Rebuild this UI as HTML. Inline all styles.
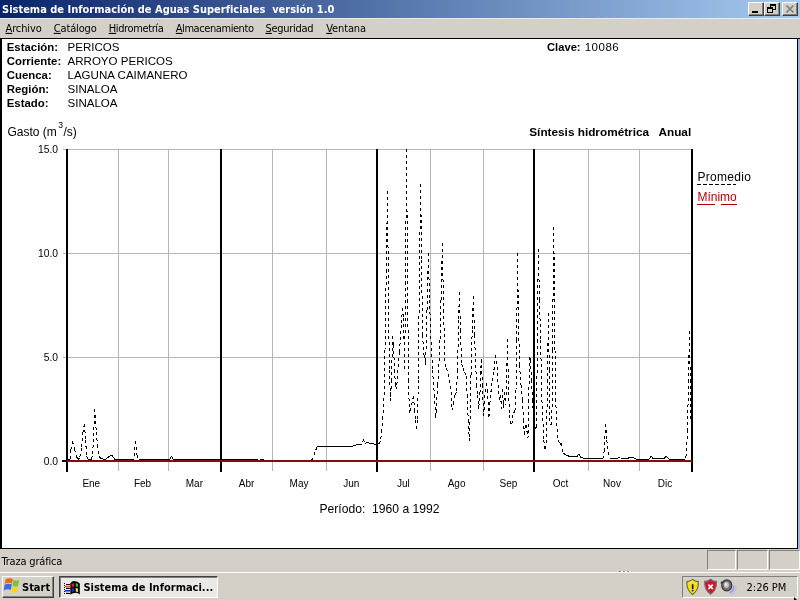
<!DOCTYPE html>
<html lang="es"><head><meta charset="utf-8"><title>Sistema de Información de Aguas Superficiales versión 1.0</title>
<style>
html,body{margin:0;padding:0;}
body{width:800px;height:600px;overflow:hidden;position:relative;background:#d4d0c8;font-family:'Liberation Sans', Arial, sans-serif;}
.abs{position:absolute;}
.t{position:absolute;white-space:pre;line-height:0;height:0;}
.t.r{transform:translateX(-100%);}
.t.c{transform:translateX(-50%);}
#titlebar{left:0;top:0;width:800px;height:18px;background:linear-gradient(to right,#0a246a 0%,#a6caf0 100%);}
#menubar{left:0;top:18px;width:800px;height:20px;background:#d4d0c8;}
#client{left:0;top:38px;width:800px;height:511px;background:#000;}
#clientw{left:2px;top:39px;width:795px;height:509px;background:#fff;}
#rblue{left:798px;top:39px;width:2px;height:510px;background:#9fb6dc;}
.btn{position:absolute;box-sizing:border-box;background:#d4d0c8;border:1px solid;border-color:#fff #404040 #404040 #fff;box-shadow:inset -1px -1px 0 #808080;}
.sunk{position:absolute;box-sizing:border-box;border:1px solid;border-color:#808080 #fff #fff #808080;}
</style></head><body>
<div id="titlebar" class="abs"></div>
<div id="menubar" class="abs"></div>
<div class="abs" style="left:0;top:18px;width:800px;height:1px;background:#eceae6"></div>
<div id="client" class="abs"></div>
<div id="clientw" class="abs"></div>
<div id="rblue" class="abs"></div>
<!-- caption buttons -->
<div class="btn" style="left:748px;top:2px;width:16px;height:14px"><div class="abs" style="left:3px;top:8px;width:6px;height:2px;background:#000"></div></div>
<div class="btn" style="left:764px;top:2px;width:16px;height:14px">
 <div class="abs" style="left:5px;top:1px;width:6px;height:6px;box-sizing:border-box;border:1px solid #000;border-top-width:2px"></div>
 <div class="abs" style="left:2px;top:4px;width:6px;height:6px;box-sizing:border-box;border:1px solid #000;border-top-width:2px;background:#d4d0c8"></div>
</div>
<div class="btn" style="left:782px;top:2px;width:16px;height:14px">
 <svg class="abs" style="left:3px;top:2px" width="9" height="8" viewBox="0 0 9 8"><path d="M0.5 0.5L7.5 7.5M7.5 0.5L0.5 7.5" stroke="#808080" stroke-width="1.6" fill="none"/></svg>
</div>
<svg id="chart" width="800" height="600" viewBox="0 0 800 600" style="position:absolute;left:0;top:0" shape-rendering="crispEdges">
<rect x="63" y="149" width="629" height="1" fill="#b6b6b6"/>
<rect x="63" y="253" width="629" height="1" fill="#b6b6b6"/>
<rect x="63" y="357" width="629" height="1" fill="#b6b6b6"/>
<rect x="118" y="149" width="1" height="322" fill="#b6b6b6"/>
<rect x="168" y="149" width="1" height="322" fill="#b6b6b6"/>
<rect x="272" y="149" width="1" height="322" fill="#b6b6b6"/>
<rect x="326" y="149" width="1" height="322" fill="#b6b6b6"/>
<rect x="430" y="149" width="1" height="322" fill="#b6b6b6"/>
<rect x="483" y="149" width="1" height="322" fill="#b6b6b6"/>
<rect x="588" y="149" width="1" height="322" fill="#b6b6b6"/>
<rect x="639" y="149" width="1" height="322" fill="#b6b6b6"/>
<path d="M70.00 459.00L68.00 459.50M70.80 450.00L70.00 459.00M72.60 441.00L70.80 450.00M72.60 441.00L74.50 449.00M74.50 449.00L76.30 456.00M76.30 456.00L78.00 459.50M79.70 458.00L78.00 459.50M81.50 448.00L79.70 458.00M83.00 432.00L81.50 448.00M84.40 424.00L83.00 432.00M84.40 424.00L85.60 440.00M85.60 440.00L86.60 456.00M86.60 456.00L88.00 459.50M88.00 459.50L89.75 459.50M89.75 459.50L91.50 459.50M92.30 456.00L91.50 459.50M93.20 445.00L92.30 456.00M94.60 409.00L93.20 445.00M94.60 409.00L96.30 432.00M96.30 432.00L97.50 445.00M97.50 445.00L98.80 456.00M98.80 456.00L100.50 458.00M100.50 458.00L102.25 458.75M102.25 458.75L104.00 459.50M106.00 459.00L104.00 459.50M108.00 457.50L106.00 459.00M109.70 456.00L108.00 457.50M111.50 455.00L109.70 456.00M111.50 455.00L113.00 457.00M113.00 457.00L115.00 459.50M115.00 459.50L116.70 459.50M116.70 459.50L118.40 459.50M118.40 459.50L120.10 459.50M120.10 459.50L121.80 459.50M121.80 459.50L123.50 459.50M123.50 459.50L125.20 459.50M125.20 459.50L126.90 459.50M126.90 459.50L128.60 459.50M128.60 459.50L130.30 459.50M130.30 459.50L132.00 459.50M132.00 459.50L133.70 459.50M135.40 441.00L133.70 459.50M135.40 441.00L137.00 455.00M137.00 455.00L138.50 459.50M138.50 459.50L140.25 459.50M140.25 459.50L142.00 459.50M142.00 459.50L143.75 459.50M143.75 459.50L145.50 459.50M145.50 459.50L147.25 459.50M147.25 459.50L149.00 459.50M149.00 459.50L150.75 459.50M150.75 459.50L152.50 459.50M152.50 459.50L154.25 459.50M154.25 459.50L156.00 459.50M156.00 459.50L157.75 459.50M157.75 459.50L159.50 459.50M159.50 459.50L161.25 459.50M161.25 459.50L163.00 459.50M163.00 459.50L164.75 459.50M164.75 459.50L166.50 459.50M166.50 459.50L168.25 459.50M168.25 459.50L170.00 459.50M171.60 456.00L170.00 459.50M171.60 456.00L173.30 459.50M173.30 459.50L175.01 459.50M175.01 459.50L176.72 459.50M176.72 459.50L178.42 459.50M178.42 459.50L180.13 459.50M180.13 459.50L181.84 459.50M181.84 459.50L183.55 459.50M183.55 459.50L185.26 459.50M185.26 459.50L186.97 459.50M186.97 459.50L188.67 459.50M188.67 459.50L190.38 459.50M190.38 459.50L192.09 459.50M192.09 459.50L193.80 459.50M193.80 459.50L195.51 459.50M195.51 459.50L197.21 459.50M197.21 459.50L198.92 459.50M198.92 459.50L200.63 459.50M200.63 459.50L202.34 459.50M202.34 459.50L204.05 459.50M204.05 459.50L205.76 459.50M205.76 459.50L207.46 459.50M207.46 459.50L209.17 459.50M209.17 459.50L210.88 459.50M210.88 459.50L212.59 459.50M212.59 459.50L214.30 459.50M214.30 459.50L216.00 459.50M216.00 459.50L217.71 459.50M217.71 459.50L219.42 459.50M219.42 459.50L221.13 459.50M221.13 459.50L222.84 459.50M222.84 459.50L224.54 459.50M224.54 459.50L226.25 459.50M226.25 459.50L227.96 459.50M227.96 459.50L229.67 459.50M229.67 459.50L231.38 459.50M231.38 459.50L233.09 459.50M233.09 459.50L234.79 459.50M234.79 459.50L236.50 459.50M236.50 459.50L238.21 459.50M238.21 459.50L239.92 459.50M239.92 459.50L241.63 459.50M241.63 459.50L243.33 459.50M243.33 459.50L245.04 459.50M245.04 459.50L246.75 459.50M246.75 459.50L248.46 459.50M248.46 459.50L250.17 459.50M250.17 459.50L251.88 459.50M251.88 459.50L253.58 459.50M253.58 459.50L255.29 459.50M255.29 459.50L257.00 459.50M257.00 459.50L258.00 461.00M258.00 461.00L260.00 461.00M261.00 459.30L260.00 461.00M261.00 459.30L263.00 459.30M263.00 459.30L264.00 461.00M264.00 461.00L265.74 461.00M265.74 461.00L267.48 461.00M267.48 461.00L269.22 461.00M269.22 461.00L270.96 461.00M270.96 461.00L272.70 461.00M272.70 461.00L274.44 461.00M274.44 461.00L276.19 461.00M276.19 461.00L277.93 461.00M277.93 461.00L279.67 461.00M279.67 461.00L281.41 461.00M281.41 461.00L283.15 461.00M283.15 461.00L284.89 461.00M284.89 461.00L286.63 461.00M286.63 461.00L288.37 461.00M288.37 461.00L290.11 461.00M290.11 461.00L291.85 461.00M291.85 461.00L293.59 461.00M293.59 461.00L295.33 461.00M295.33 461.00L297.07 461.00M297.07 461.00L298.81 461.00M298.81 461.00L300.56 461.00M300.56 461.00L302.30 461.00M302.30 461.00L304.04 461.00M304.04 461.00L305.78 461.00M305.78 461.00L307.52 461.00M307.52 461.00L309.26 461.00M309.26 461.00L311.00 461.00M313.00 458.00L311.00 461.00M315.00 452.00L313.00 458.00M317.00 447.00L315.00 452.00M318.50 446.00L317.00 447.00M318.50 446.00L320.15 446.04M320.15 446.04L321.81 446.08M321.81 446.08L323.46 446.12M323.46 446.12L325.12 446.15M325.12 446.15L326.77 446.19M326.77 446.19L328.42 446.23M328.42 446.23L330.08 446.27M330.08 446.27L331.73 446.31M331.73 446.31L333.38 446.35M333.38 446.35L335.04 446.38M335.04 446.38L336.69 446.42M336.69 446.42L338.35 446.46M338.35 446.46L340.00 446.50M340.00 446.50L341.50 446.75M341.50 446.75L343.00 447.00M344.67 446.67L343.00 447.00M346.33 446.33L344.67 446.67M348.00 446.00L346.33 446.33M348.00 446.00L349.67 446.00M349.67 446.00L351.33 446.00M351.33 446.00L353.00 446.00M354.50 445.50L353.00 446.00M356.00 445.00L354.50 445.50M358.00 444.00L356.00 445.00M358.00 444.00L360.00 445.00M362.00 444.00L360.00 445.00M363.60 439.50L362.00 444.00M363.60 439.50L365.00 444.00M367.00 442.00L365.00 444.00M367.00 442.00L368.50 443.00M368.50 443.00L370.25 443.00M370.25 443.00L372.00 443.00M372.00 443.00L374.00 444.00M374.00 444.00L375.50 444.25M375.50 444.25L377.00 444.50M379.00 443.50L377.00 444.50M380.50 441.00L379.00 443.50M381.90 430.00L380.50 441.00M382.80 417.00L381.90 430.00M383.80 404.00L382.80 417.00M385.00 350.00L383.80 404.00M386.30 270.00L385.00 350.00M387.50 191.00L386.30 270.00M387.50 191.00L388.50 300.00M388.50 300.00L389.40 370.00M389.40 370.00L390.50 401.00M391.50 380.00L390.50 401.00M392.50 336.00L391.50 380.00M392.50 336.00L393.50 345.00M393.50 345.00L394.50 370.00M394.50 370.00L395.50 385.00M395.50 385.00L396.50 389.00M398.00 370.00L396.50 389.00M399.50 352.00L398.00 370.00M401.30 325.00L399.50 352.00M402.50 308.00L401.30 325.00M402.50 308.00L403.50 318.00M403.50 318.00L404.60 370.00M405.60 282.00L404.60 370.00M406.50 149.00L405.60 282.00M406.50 149.00L407.75 300.00M407.75 300.00L408.50 380.00M408.50 380.00L409.40 413.00M411.00 408.00L409.40 413.00M412.30 402.00L411.00 408.00M413.50 396.00L412.30 402.00M413.50 396.00L414.50 410.00M414.50 410.00L415.50 420.00M415.50 420.00L416.50 430.00M417.50 420.00L416.50 430.00M418.30 380.00L417.50 420.00M419.40 280.00L418.30 380.00M420.60 184.00L419.40 280.00M420.60 184.00L421.60 260.00M421.60 260.00L422.50 335.00M422.50 335.00L424.00 355.00M424.00 355.00L425.60 365.00M427.00 310.00L425.60 365.00M428.40 253.00L427.00 310.00M428.40 253.00L429.50 300.00M429.50 300.00L430.60 330.00M430.60 330.00L432.50 370.00M432.50 370.00L434.40 395.00M434.40 395.00L435.60 418.00M436.50 410.00L435.60 418.00M437.50 385.00L436.50 410.00M438.75 370.00L437.50 385.00M440.00 340.00L438.75 370.00M441.00 300.00L440.00 340.00M442.40 243.00L441.00 300.00M442.40 243.00L443.50 310.00M443.50 310.00L445.00 364.00M445.00 364.00L446.50 368.00M446.50 368.00L448.00 374.00M448.00 374.00L449.50 380.00M449.50 380.00L451.00 392.00M451.00 392.00L452.20 410.00M453.50 402.00L452.20 410.00M455.00 395.00L453.50 402.00M456.50 392.00L455.00 395.00M457.50 370.00L456.50 392.00M458.60 320.00L457.50 370.00M459.40 292.00L458.60 320.00M459.40 292.00L460.50 330.00M460.50 330.00L461.50 364.00M461.50 364.00L463.00 368.00M463.00 368.00L464.50 372.00M464.50 372.00L466.20 376.00M466.20 376.00L467.20 395.00M467.20 395.00L468.20 420.00M468.20 420.00L469.40 440.60M470.30 410.00L469.40 440.60M471.00 375.00L470.30 410.00M472.20 330.00L471.00 375.00M473.40 296.00L472.20 330.00M473.40 296.00L474.40 335.00M474.40 335.00L475.50 359.00M475.50 359.00L476.50 385.00M476.50 385.00L477.50 395.00M477.50 395.00L478.75 409.00M480.00 392.00L478.75 409.00M480.80 372.00L480.00 392.00M481.30 359.50L480.80 372.00M481.30 359.50L482.30 385.00M482.30 385.00L483.75 416.00M485.00 395.00L483.75 416.00M486.30 383.00L485.00 395.00M486.30 383.00L487.50 390.00M487.50 390.00L488.75 420.00M490.00 402.00L488.75 420.00M490.60 395.00L490.00 402.00M492.00 383.00L490.60 395.00M493.75 372.00L492.00 383.00M495.60 355.00L493.75 372.00M495.60 355.00L497.00 367.00M497.00 367.00L498.50 391.00M498.50 391.00L499.50 400.00M500.50 395.00L499.50 400.00M500.50 395.00L501.50 409.00M502.50 389.00L501.50 409.00M502.50 389.00L503.50 408.00M504.60 392.00L503.50 408.00M504.60 392.00L505.60 405.00M506.60 380.00L505.60 405.00M507.50 338.75L506.60 380.00M507.50 338.75L508.50 392.00M508.50 392.00L509.50 415.00M509.50 415.00L511.50 427.00M513.00 415.00L511.50 427.00M515.00 410.00L513.00 415.00M516.00 390.00L515.00 410.00M516.80 340.00L516.00 390.00M517.40 253.00L516.80 340.00M517.40 253.00L518.50 320.00M518.50 320.00L519.50 365.00M519.50 365.00L521.00 385.00M521.00 385.00L522.50 400.00M522.50 400.00L523.50 420.00M523.50 420.00L524.40 435.00M526.00 425.00L524.40 435.00M526.00 425.00L528.00 438.00M528.80 400.00L528.00 438.00M529.40 357.00L528.80 400.00M529.40 357.00L530.60 360.00M530.60 360.00L531.50 380.00M531.50 380.00L532.50 400.00M532.50 400.00L534.50 430.00M536.25 427.00L534.50 430.00M537.50 340.00L536.25 427.00M538.25 249.00L537.50 340.00M538.25 249.00L539.50 300.00M539.50 300.00L540.60 340.00M540.60 340.00L541.90 400.00M541.90 400.00L543.75 440.00M543.75 440.00L545.40 452.00M546.50 440.00L545.40 452.00M547.50 380.00L546.50 440.00M548.40 313.00L547.50 380.00M548.40 313.00L549.30 370.00M549.30 370.00L550.00 424.00M550.00 424.00L551.90 424.00M552.50 350.00L551.90 424.00M553.75 227.50L552.50 350.00M553.75 227.50L555.00 350.00M555.00 350.00L555.60 399.00M555.60 399.00L557.50 435.00M557.50 435.00L558.50 440.00M558.50 440.00L560.00 445.00M561.50 443.00L560.00 445.00M561.50 443.00L563.00 453.00M563.00 453.00L564.50 454.00M564.50 454.00L566.00 455.00M566.00 455.00L568.00 455.80M568.00 455.80L570.00 456.60M570.00 456.60L571.67 456.73M571.67 456.73L573.33 456.87M573.33 456.87L575.00 457.00M577.50 456.00L575.00 457.00M579.00 454.00L577.50 456.00M579.00 454.00L580.50 457.00M580.50 457.00L582.25 457.70M582.25 457.70L584.00 458.40M585.73 458.39L584.00 458.40M587.45 458.38L585.73 458.39M589.18 458.37L587.45 458.38M590.91 458.36L589.18 458.37M592.64 458.35L590.91 458.36M594.36 458.35L592.64 458.35M596.09 458.34L594.36 458.35M597.82 458.33L596.09 458.34M599.55 458.32L597.82 458.33M601.27 458.31L599.55 458.32M603.00 458.30L601.27 458.31M604.30 450.00L603.00 458.30M605.60 424.00L604.30 450.00M605.60 424.00L606.80 440.00M606.80 440.00L608.00 452.00M608.00 452.00L609.50 458.00M609.50 458.00L611.33 458.17M611.33 458.17L613.17 458.33M613.17 458.33L615.00 458.50M616.50 458.25L615.00 458.50M618.00 458.00L616.50 458.25M619.00 457.30L618.00 458.00M619.00 457.30L620.50 458.50M620.50 458.50L622.12 458.50M622.12 458.50L623.75 458.50M623.75 458.50L625.38 458.50M625.38 458.50L627.00 458.50M628.50 458.00L627.00 458.50M630.00 457.50L628.50 458.00M632.00 457.00L630.00 457.50M632.00 457.00L634.00 458.00M634.00 458.00L636.00 459.00M636.00 459.00L637.62 459.00M637.62 459.00L639.25 459.00M639.25 459.00L640.88 459.00M640.88 459.00L642.50 459.00M642.50 459.00L644.12 459.00M644.12 459.00L645.75 459.00M645.75 459.00L647.38 459.00M647.38 459.00L649.00 459.00M650.30 457.50L649.00 459.00M651.40 456.00L650.30 457.50M651.40 456.00L652.60 458.50M652.60 458.50L654.07 458.67M654.07 458.67L655.53 458.83M655.53 458.83L657.00 459.00M659.00 458.00L657.00 459.00M659.00 458.00L661.00 459.00M662.50 458.75L661.00 459.00M664.00 458.50L662.50 458.75M665.50 457.00L664.00 458.50M666.60 456.00L665.50 457.00M666.60 456.00L667.80 458.00M667.80 458.00L669.00 459.00M669.00 459.00L670.78 459.00M670.78 459.00L672.56 459.00M672.56 459.00L674.33 459.00M674.33 459.00L676.11 459.00M676.11 459.00L677.89 459.00M677.89 459.00L679.67 459.00M679.67 459.00L681.44 459.00M681.44 459.00L683.22 459.00M683.22 459.00L685.00 459.00M686.50 455.00L685.00 459.00M687.50 430.00L686.50 455.00M688.50 380.00L687.50 430.00M689.40 331.00L688.50 380.00M689.40 331.00L690.30 380.00M690.30 380.00L691.00 420.00M691.00 420.00L692.00 440.00" fill="none" stroke="#000" stroke-width="1" stroke-dasharray="3 3" shape-rendering="crispEdges"/>
<rect x="66" y="149" width="2" height="323" fill="#000"/>
<rect x="220" y="149" width="2" height="323" fill="#000"/>
<rect x="376" y="149" width="2" height="323" fill="#000"/>
<rect x="533" y="149" width="2" height="323" fill="#000"/>
<rect x="691" y="149" width="2" height="323" fill="#000"/>
<rect x="62" y="460" width="5" height="2" fill="#000"/>
<rect x="67" y="460" width="625" height="2" fill="#8c0a0a"/>
<path d="M697 184.5H736" stroke="#000" stroke-width="1" stroke-dasharray="4 2" fill="none"/>
<path d="M697 204.5H715M721 204.5H737" stroke="#b00000" stroke-width="1" fill="none"/>
</svg>
<!-- status bar -->
<div class="sunk" style="left:707px;top:550px;width:29px;height:20px"></div>
<div class="sunk" style="left:737px;top:550px;width:31px;height:20px"></div>
<div class="sunk" style="left:769px;top:550px;width:31px;height:20px"></div>
<div class="abs" style="left:0;top:572px;width:800px;height:1px;background:#fff"></div>
<div class="abs" style="left:619px;top:571px;width:11px;height:1px;background:repeating-linear-gradient(to right,#808080 0 2px,#fff 2px 4px)"></div>
<!-- taskbar -->
<div class="btn" style="left:2px;top:576px;width:52px;height:22px"></div>
<div class="sunk" style="left:59px;top:576px;width:159px;height:22px;background:#ebe9e5;border-color:#404040 #fff #fff #404040;box-shadow:inset 1px 1px 0 #808080"></div>
<svg class="abs" style="left:3px;top:577px" width="18" height="18" viewBox="0 0 18 18">
 <path d="M2.6 2.6 Q6 0.4 10 2 L9 6.6 Q5.5 5 1.8 6.9Z" fill="#e8681c"/>
 <path d="M10.6 2.8 Q13 4.6 16.2 3 L15 9 Q12.5 10.6 9.5 8.6Z" fill="#7cc428"/>
 <path d="M1.6 7.7 Q5 5.9 8.8 7.3 L7.8 13 Q4.5 11.6 0.8 13.3Z" fill="#3c6ce0"/>
 <path d="M9.3 9.4 Q12 11.2 15 9.9 L14 15 Q11.5 16.6 8.3 14.8Z" fill="#f4d418"/>
</svg>
<svg class="abs" style="left:63px;top:580px" width="18" height="16" viewBox="0 0 18 16">
 <path d="M7.3 3.2 Q9.5 0.6 12 1.2 Q14.5 1.2 16.8 3.6 L16.8 14.6 Q14.5 12.4 12 13 Q9.5 12.6 7.3 14.8Z" fill="#000"/>
 <path d="M8.6 4 L11 3 L11 6.4 L8.6 7Z" fill="#e02020"/><path d="M12.7 3 L15 4 L15 7 L12.7 6.4Z" fill="#20c040"/>
 <path d="M8.6 8.4 L11 8 L11 11.4 L8.6 12Z" fill="#2030d0"/><path d="M12.7 8 L15 8.6 L15 12 L12.7 11.4Z" fill="#f0e040"/>
 <path d="M1 3.5h1M1 5.5h1M1 7.5h1M1 9.5h1M1 11.5h1M1 13.5h1M3 4.5h4M3 8.5h4M3 13.5h4" stroke="#000" stroke-width="1"/>
 <path d="M2 6.5h5.3" stroke="#e04040" stroke-width="1.4"/><path d="M2 10.8h5.3" stroke="#2030d0" stroke-width="1.6"/>
 <path d="M3 7.6h3M3 12.2h3" stroke="#e070c0" stroke-width="0.8"/>
</svg>
<!-- tray -->
<div class="sunk" style="left:682px;top:576px;width:116px;height:22px"></div>
<svg class="abs" style="left:685px;top:578px" width="54" height="18" viewBox="0 0 54 18">
 <path d="M7.6 1.4 Q10.5 3.8 13.3 3.6 Q13.9 12 7.6 16.5 Q1.3 12 1.9 3.6 Q4.7 3.8 7.6 1.4Z" fill="#f4e010" stroke="#6a6430" stroke-width="1.1"/>
 <path d="M4 5 Q5 4.6 7.4 3.2" stroke="#fff8a0" stroke-width="1" fill="none"/>
 <rect x="6.9" y="6.3" width="1.5" height="4.6" fill="#000"/><rect x="6.9" y="11.8" width="1.5" height="1.5" fill="#000"/>
 <path d="M25.6 1.2 Q28.5 3.6 31.5 3.4 Q32.1 12 25.6 16.3 Q19.1 12 19.7 3.4 Q22.7 3.6 25.6 1.2Z" fill="#d01828" stroke="#78707c" stroke-width="1.2"/>
 <path d="M23.4 6.6L27.8 11M27.8 6.6L23.4 11" stroke="#fff" stroke-width="1.7"/>
 <ellipse cx="41.8" cy="7.4" rx="5" ry="5.5" fill="#707070" stroke="#383838" stroke-width="1.2"/><ellipse cx="41.4" cy="7" rx="2.6" ry="3" fill="#c4c4c4"/><ellipse cx="40.9" cy="6.4" rx="1.1" ry="1.3" fill="#f0f0f0"/>
 <path d="M37 3.5 L35.8 5.5" stroke="#383838" stroke-width="1.2"/>
 <path d="M48.2 8 Q50 12 44.5 14.8" stroke="#9098e8" stroke-width="1.4" fill="none"/><path d="M50.5 7.4 Q52.6 13.4 45.5 17" stroke="#b8bcf4" stroke-width="1.3" fill="none"/>
</svg>
<svg class="abs" style="left:793px;top:596px" width="5" height="4" viewBox="0 0 5 4"><path d="M1 1L4 4L1 4Z" fill="#000"/></svg>
<svg id="txt" width="800" height="600" viewBox="0 0 800 600" style="position:absolute;left:0;top:0;will-change:transform">
<text id="t0" x="2" y="12.8" font-family="'DejaVu Sans Condensed', 'DejaVu Sans', 'Liberation Sans', sans-serif" font-size="11" font-weight="bold" fill="#fff" text-anchor="start" xml:space="preserve">Sistema de Información de Aguas Superficiales  versión 1.0</text>
<text id="t1" x="5.5" y="31.9" font-family="'DejaVu Sans Condensed', 'DejaVu Sans', 'Liberation Sans', sans-serif" font-size="11" font-weight="normal" fill="#000" text-anchor="start" textLength="36.3" lengthAdjust="spacing" xml:space="preserve"><tspan text-decoration="underline">A</tspan>rchivo</text>
<text id="t2" x="53.75" y="31.9" font-family="'DejaVu Sans Condensed', 'DejaVu Sans', 'Liberation Sans', sans-serif" font-size="11" font-weight="normal" fill="#000" text-anchor="start" textLength="43" lengthAdjust="spacing" xml:space="preserve"><tspan text-decoration="underline">C</tspan>atálogo</text>
<text id="t3" x="108.75" y="31.9" font-family="'DejaVu Sans Condensed', 'DejaVu Sans', 'Liberation Sans', sans-serif" font-size="11" font-weight="normal" fill="#000" text-anchor="start" textLength="55" lengthAdjust="spacing" xml:space="preserve"><tspan text-decoration="underline">H</tspan>idrometría</text>
<text id="t4" x="175.75" y="31.9" font-family="'DejaVu Sans Condensed', 'DejaVu Sans', 'Liberation Sans', sans-serif" font-size="11" font-weight="normal" fill="#000" text-anchor="start" textLength="78.2" lengthAdjust="spacing" xml:space="preserve"><tspan text-decoration="underline">A</tspan>lmacenamiento</text>
<text id="t5" x="265.5" y="31.9" font-family="'DejaVu Sans Condensed', 'DejaVu Sans', 'Liberation Sans', sans-serif" font-size="11" font-weight="normal" fill="#000" text-anchor="start" textLength="48" lengthAdjust="spacing" xml:space="preserve"><tspan text-decoration="underline">S</tspan>eguridad</text>
<text id="t6" x="326.25" y="31.9" font-family="'DejaVu Sans Condensed', 'DejaVu Sans', 'Liberation Sans', sans-serif" font-size="11" font-weight="normal" fill="#000" text-anchor="start" textLength="39.8" lengthAdjust="spacing" xml:space="preserve"><tspan text-decoration="underline">V</tspan>entana</text>
<text id="t7" x="6.75" y="51" font-family="'Liberation Sans', Arial, sans-serif" font-size="11.4" font-weight="bold" fill="#000" text-anchor="start" xml:space="preserve">Estación:</text>
<text id="t8" x="67.5" y="51" font-family="'Liberation Sans', Arial, sans-serif" font-size="11.55" font-weight="normal" fill="#000" text-anchor="start" xml:space="preserve">PERICOS</text>
<text id="t9" x="6.75" y="65" font-family="'Liberation Sans', Arial, sans-serif" font-size="11.4" font-weight="bold" fill="#000" text-anchor="start" xml:space="preserve">Corriente:</text>
<text id="t10" x="67.5" y="65" font-family="'Liberation Sans', Arial, sans-serif" font-size="11.55" font-weight="normal" fill="#000" text-anchor="start" xml:space="preserve">ARROYO PERICOS</text>
<text id="t11" x="6.75" y="79" font-family="'Liberation Sans', Arial, sans-serif" font-size="11.4" font-weight="bold" fill="#000" text-anchor="start" xml:space="preserve">Cuenca:</text>
<text id="t12" x="67.5" y="79" font-family="'Liberation Sans', Arial, sans-serif" font-size="11.55" font-weight="normal" fill="#000" text-anchor="start" xml:space="preserve">LAGUNA CAIMANERO</text>
<text id="t13" x="6.75" y="93" font-family="'Liberation Sans', Arial, sans-serif" font-size="11.4" font-weight="bold" fill="#000" text-anchor="start" xml:space="preserve">Región:</text>
<text id="t14" x="67.5" y="93" font-family="'Liberation Sans', Arial, sans-serif" font-size="11.55" font-weight="normal" fill="#000" text-anchor="start" xml:space="preserve">SINALOA</text>
<text id="t15" x="6.75" y="107" font-family="'Liberation Sans', Arial, sans-serif" font-size="11.4" font-weight="bold" fill="#000" text-anchor="start" xml:space="preserve">Estado:</text>
<text id="t16" x="67.5" y="107" font-family="'Liberation Sans', Arial, sans-serif" font-size="11.55" font-weight="normal" fill="#000" text-anchor="start" xml:space="preserve">SINALOA</text>
<text id="t17" x="547" y="51" font-family="'Liberation Sans', Arial, sans-serif" font-size="11.2" font-weight="bold" fill="#000" text-anchor="start" xml:space="preserve">Clave:</text>
<text id="t18" x="584.7" y="51" font-family="'Liberation Sans', Arial, sans-serif" font-size="11.55" font-weight="normal" fill="#000" text-anchor="start" textLength="34" lengthAdjust="spacing" xml:space="preserve">10086</text>
<text id="t19" x="7.5" y="135.6" font-family="'Liberation Sans', Arial, sans-serif" font-size="12" font-weight="normal" fill="#000" text-anchor="start" xml:space="preserve">Gasto (m</text>
<text id="t20" x="58.2" y="128.3" font-family="'Liberation Sans', Arial, sans-serif" font-size="8.6" font-weight="normal" fill="#000" text-anchor="start" xml:space="preserve">3</text>
<text id="t21" x="63.5" y="135.6" font-family="'Liberation Sans', Arial, sans-serif" font-size="12" font-weight="normal" fill="#000" text-anchor="start" xml:space="preserve">/s)</text>
<text id="t22" x="529.25" y="135.9" font-family="'Liberation Sans', Arial, sans-serif" font-size="11.79" font-weight="bold" fill="#000" text-anchor="start" xml:space="preserve">Síntesis hidrométrica   Anual</text>
<text id="t23" x="697.4" y="180.75" font-family="'Liberation Sans', Arial, sans-serif" font-size="12" font-weight="normal" fill="#000" text-anchor="start" textLength="53.5" lengthAdjust="spacing" xml:space="preserve">Promedio</text>
<text id="t24" x="697.4" y="200.6" font-family="'Liberation Sans', Arial, sans-serif" font-size="12" font-weight="normal" fill="#b00000" text-anchor="start" xml:space="preserve">Mínimo</text>
<text id="t25" x="58.1" y="152.75" font-family="'Liberation Sans', Arial, sans-serif" font-size="10.3" font-weight="normal" fill="#000" text-anchor="end" xml:space="preserve">15.0</text>
<text id="t26" x="58.1" y="256.75" font-family="'Liberation Sans', Arial, sans-serif" font-size="10.3" font-weight="normal" fill="#000" text-anchor="end" xml:space="preserve">10.0</text>
<text id="t27" x="58.1" y="360.75" font-family="'Liberation Sans', Arial, sans-serif" font-size="10.3" font-weight="normal" fill="#000" text-anchor="end" xml:space="preserve">5.0</text>
<text id="t28" x="58.1" y="464.75" font-family="'Liberation Sans', Arial, sans-serif" font-size="10.3" font-weight="normal" fill="#000" text-anchor="end" xml:space="preserve">0.0</text>
<text id="t29" x="91.3" y="487" font-family="'Liberation Sans', Arial, sans-serif" font-size="10" font-weight="normal" fill="#000" text-anchor="middle" xml:space="preserve">Ene</text>
<text id="t30" x="142.5" y="487" font-family="'Liberation Sans', Arial, sans-serif" font-size="10" font-weight="normal" fill="#000" text-anchor="middle" xml:space="preserve">Feb</text>
<text id="t31" x="194.4" y="487" font-family="'Liberation Sans', Arial, sans-serif" font-size="10" font-weight="normal" fill="#000" text-anchor="middle" xml:space="preserve">Mar</text>
<text id="t32" x="246.5" y="487" font-family="'Liberation Sans', Arial, sans-serif" font-size="10" font-weight="normal" fill="#000" text-anchor="middle" xml:space="preserve">Abr</text>
<text id="t33" x="299" y="487" font-family="'Liberation Sans', Arial, sans-serif" font-size="10" font-weight="normal" fill="#000" text-anchor="middle" xml:space="preserve">May</text>
<text id="t34" x="351.2" y="487" font-family="'Liberation Sans', Arial, sans-serif" font-size="10" font-weight="normal" fill="#000" text-anchor="middle" xml:space="preserve">Jun</text>
<text id="t35" x="403.3" y="487" font-family="'Liberation Sans', Arial, sans-serif" font-size="10" font-weight="normal" fill="#000" text-anchor="middle" xml:space="preserve">Jul</text>
<text id="t36" x="456.6" y="487" font-family="'Liberation Sans', Arial, sans-serif" font-size="10" font-weight="normal" fill="#000" text-anchor="middle" xml:space="preserve">Ago</text>
<text id="t37" x="508.5" y="487" font-family="'Liberation Sans', Arial, sans-serif" font-size="10" font-weight="normal" fill="#000" text-anchor="middle" xml:space="preserve">Sep</text>
<text id="t38" x="560.5" y="487" font-family="'Liberation Sans', Arial, sans-serif" font-size="10" font-weight="normal" fill="#000" text-anchor="middle" xml:space="preserve">Oct</text>
<text id="t39" x="612" y="487" font-family="'Liberation Sans', Arial, sans-serif" font-size="10" font-weight="normal" fill="#000" text-anchor="middle" xml:space="preserve">Nov</text>
<text id="t40" x="665" y="487" font-family="'Liberation Sans', Arial, sans-serif" font-size="10" font-weight="normal" fill="#000" text-anchor="middle" xml:space="preserve">Dic</text>
<text id="t41" x="379.5" y="512.6" font-family="'Liberation Sans', Arial, sans-serif" font-size="12.15" font-weight="normal" fill="#000" text-anchor="middle" xml:space="preserve">Período:  1960 a 1992</text>
<text id="t42" x="1.4" y="564.5" font-family="'DejaVu Sans Condensed', 'DejaVu Sans', 'Liberation Sans', sans-serif" font-size="11" font-weight="normal" fill="#000" text-anchor="start" textLength="61" lengthAdjust="spacing" xml:space="preserve">Traza gráfica</text>
<text id="t43" x="22" y="591" font-family="'DejaVu Sans Condensed', 'DejaVu Sans', 'Liberation Sans', sans-serif" font-size="11" font-weight="bold" fill="#000" text-anchor="start" xml:space="preserve">Start</text>
<text id="t44" x="83.4" y="591.3" font-family="'DejaVu Sans Condensed', 'DejaVu Sans', 'Liberation Sans', sans-serif" font-size="11" font-weight="bold" fill="#000" text-anchor="start" xml:space="preserve">Sistema de Informaci...</text>
<text id="t45" x="746.5" y="591" font-family="'DejaVu Sans Condensed', 'DejaVu Sans', 'Liberation Sans', sans-serif" font-size="11" font-weight="normal" fill="#000" text-anchor="start" xml:space="preserve">2:26 PM</text>
</svg>
</body></html>
